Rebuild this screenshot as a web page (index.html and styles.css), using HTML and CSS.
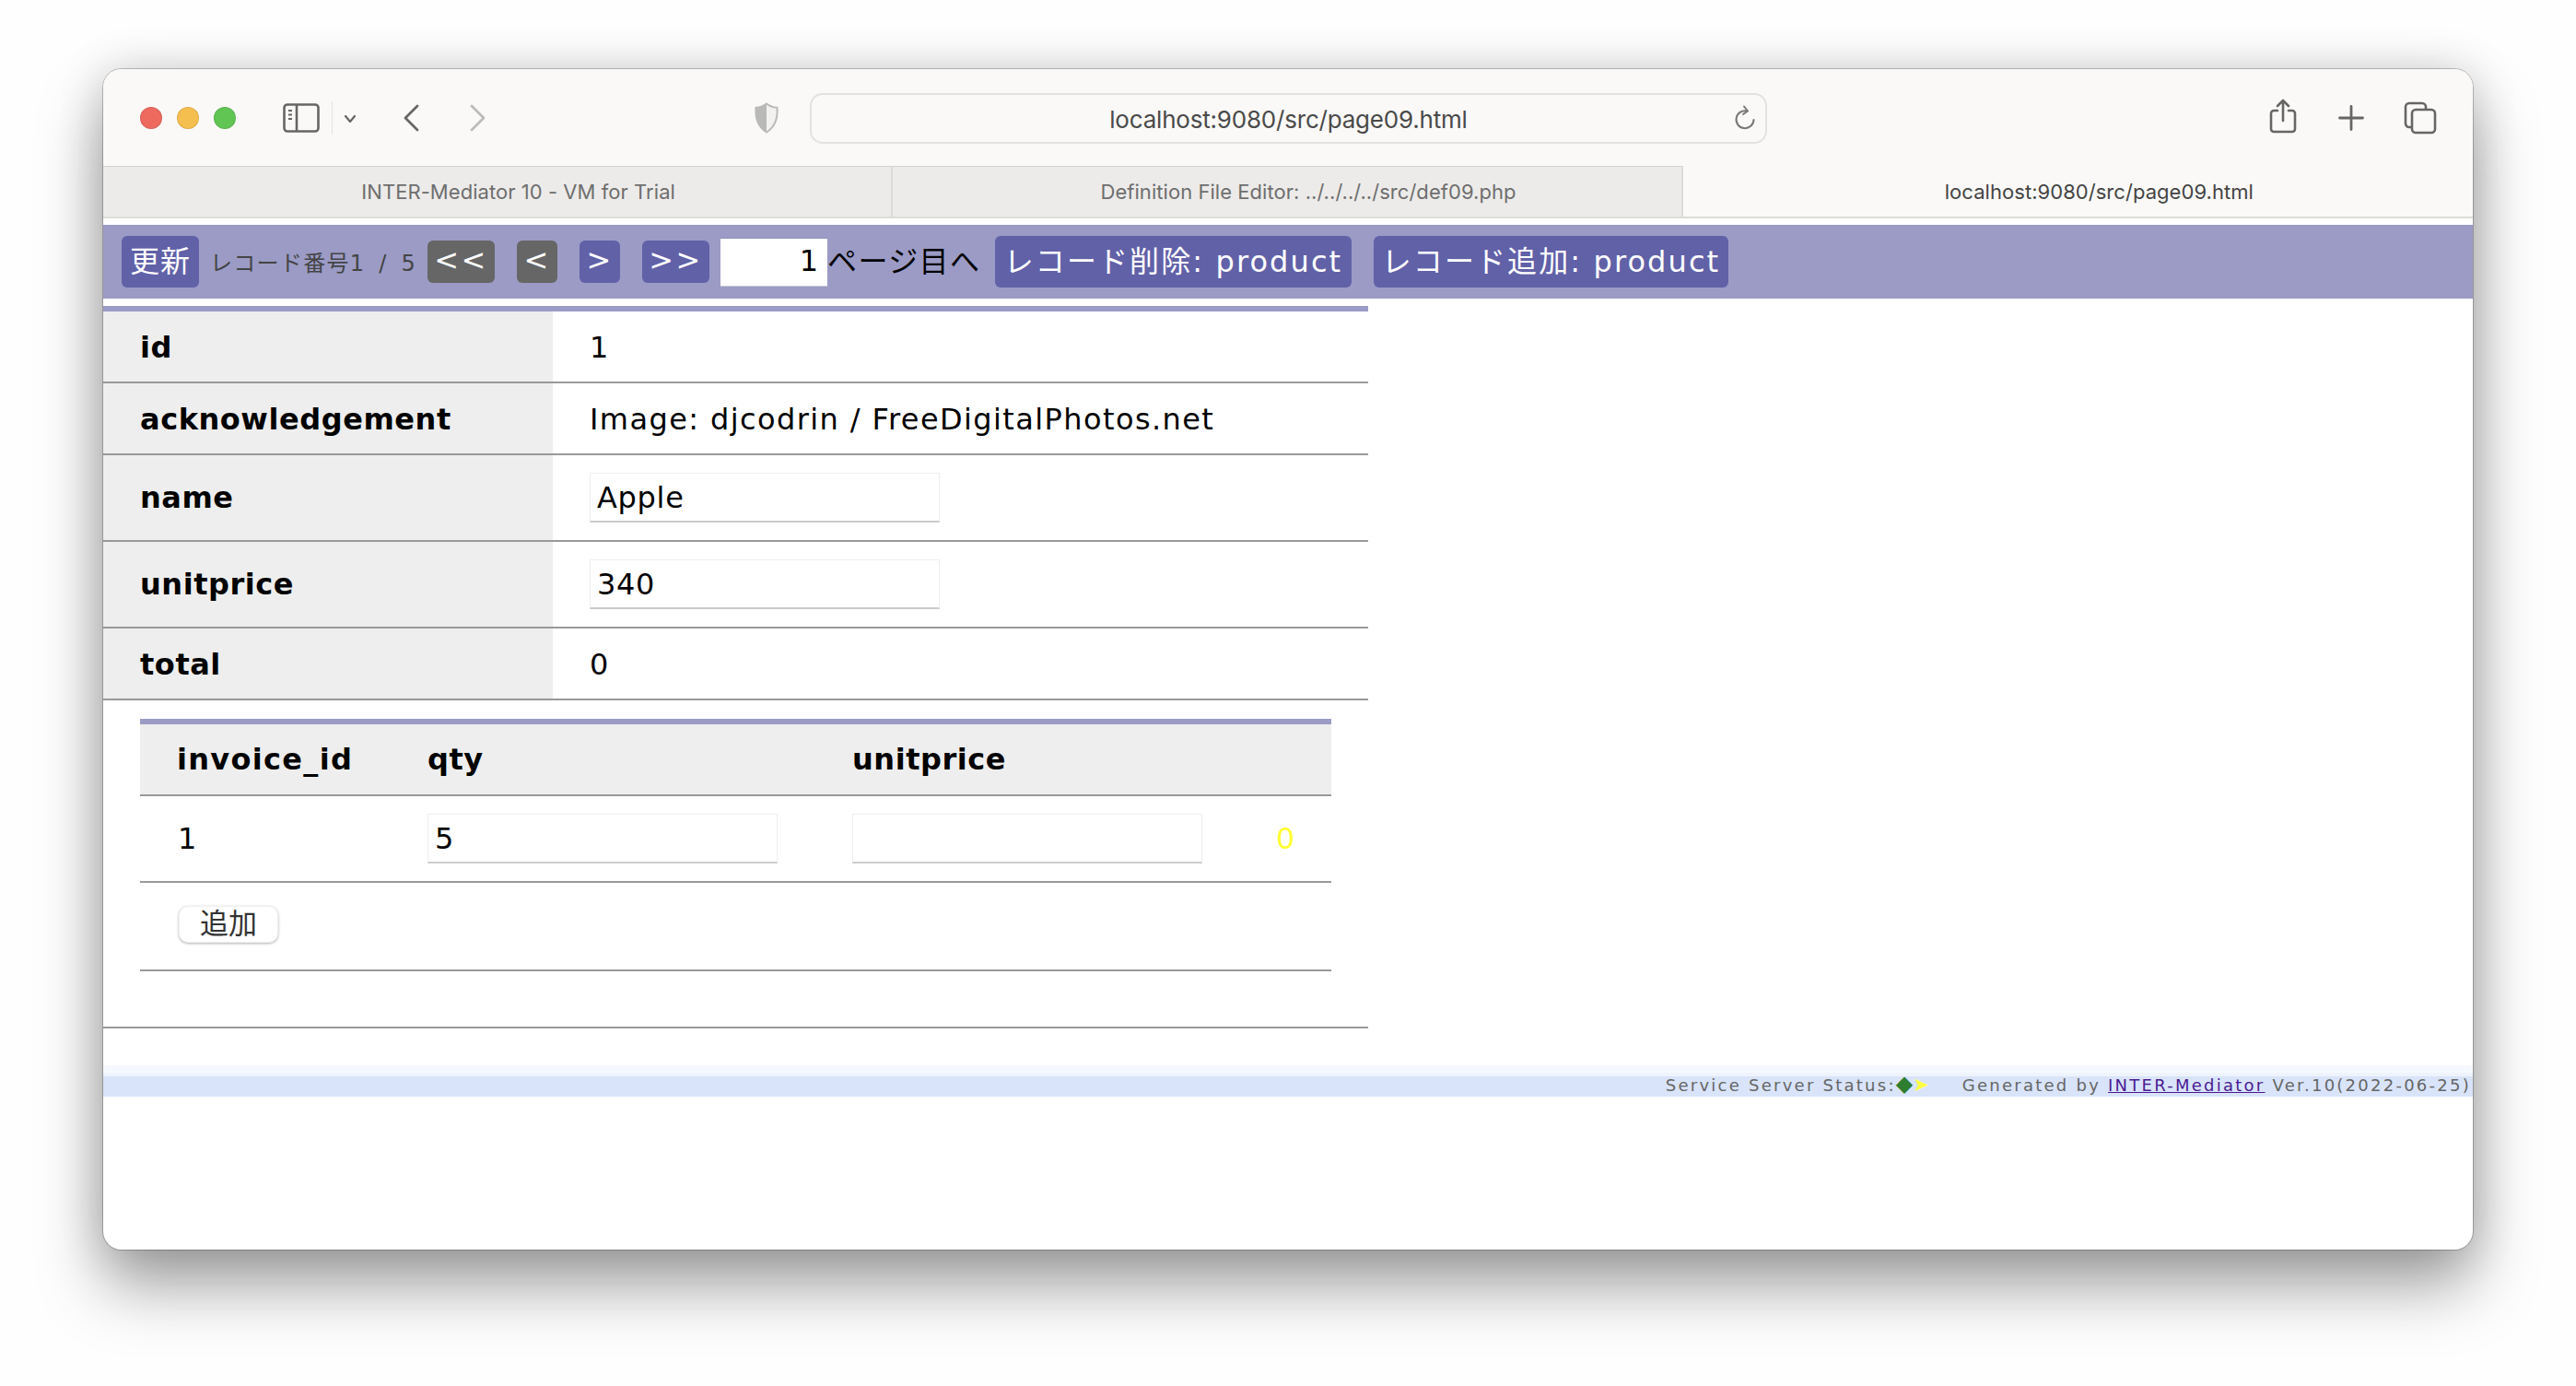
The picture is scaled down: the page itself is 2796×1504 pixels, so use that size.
FILE: index.html
```html
<!DOCTYPE html>
<html lang="ja">
<head>
<meta charset="utf-8">
<title>localhost:9080/src/page09.html</title>
<link rel="stylesheet" href="styles.css">
</head>
<body>
<div class="window">
  <header class="toolbar">
    <div class="lights">
      <span class="light red"></span><span class="light yellow"></span><span class="light green"></span>
    </div>
    <svg class="ic-sidebar" width="40" height="32" viewBox="0 0 40 32" fill="none" stroke="#666" stroke-width="2.6">
      <rect x="1.500" y="1.500" width="37" height="29" rx="3.500"/><path d="M15 2v28"/>
      <path d="M6 8h4M6 12.500h4M6 17h4" stroke-width="2"/>
    </svg>
    <span class="tb-sep"></span>
    <svg class="ic-drop" width="14" height="10" viewBox="0 0 14 10" fill="none" stroke="#666" stroke-width="2.2" stroke-linecap="round" stroke-linejoin="round"><path d="M2 2l5 6 5-6"/></svg>
    <svg class="ic-back" width="18" height="30" viewBox="0 0 18 30" fill="none" stroke="#666" stroke-width="2.8" stroke-linecap="round" stroke-linejoin="round"><path d="M16 2L3 15l13 13"/></svg>
    <svg class="ic-fwd" width="18" height="30" viewBox="0 0 18 30" fill="none" stroke="#bbb" stroke-width="2.8" stroke-linecap="round" stroke-linejoin="round"><path d="M2 2l13 13L2 28"/></svg>
    <svg class="ic-shield" width="28" height="34" viewBox="0 0 28 34">
      <path d="M14 1.500c3 2.500 7 4 11.500 4.300 .8 10.500-1 20-11.500 26.700C3.500 25.800 1.700 16.300 2.500 5.800 7 5.500 11 4 14 1.500z" fill="#f2f1ef" stroke="#b9b9b7" stroke-width="2"/>
      <path d="M14 1.500C11 4 7 5.500 2.500 5.800 1.700 16.300 3.500 25.800 14 32.500z" fill="#b9b9b7"/>
    </svg>
    <div class="urlbar">
      <span class="url">localhost:9080/src/page09.html</span>
      <svg class="ic-reload" width="24" height="28" viewBox="0 0 24 28" fill="none" stroke="#777" stroke-width="2" stroke-linecap="round" stroke-linejoin="round"><path d="M14.500 6.500A9.500 9.500 0 1 0 21.500 16"/><path d="M11 1.500l4 5-5 3.500"/></svg>
    </div>
    <svg class="ic-share" width="30" height="38" viewBox="0 0 30 38" fill="none" stroke="#666" stroke-width="2.6" stroke-linecap="round" stroke-linejoin="round"><path d="M9 13H5a3 3 0 0 0-3 3v17a3 3 0 0 0 3 3h20a3 3 0 0 0 3-3V16a3 3 0 0 0-3-3h-4"/><path d="M15 24V2M9 8l6-6 6 6"/></svg>
    <svg class="ic-plus" width="28" height="28" viewBox="0 0 28 28" stroke="#666" stroke-width="2.8" stroke-linecap="round"><path d="M14 1.500v25M1.500 14h25"/></svg>
    <svg class="ic-tabs" width="36" height="36" viewBox="0 0 36 36" fill="none" stroke="#666" stroke-width="2.6"><path d="M8 28H6a4 4 0 0 1-4-4V6a4 4 0 0 1 4-4h14a4 4 0 0 1 4 4v2"/><rect x="9" y="9" width="25" height="25" rx="4"/></svg>
  </header>
  <nav class="tabs">
    <div class="tab">INTER-Mediator 10 - VM for Trial</div>
    <div class="tab">Definition File Editor: ../../../../src/def09.php</div>
    <div class="tab tab-active">localhost:9080/src/page09.html</div>
  </nav>
  <main class="page">
    <div class="navbar">
      <button class="btn btn-big btn-refresh" type="button">更新</button>
      <span class="counter">レコード番号1 / 5</span>
      <button class="btn btn-step btn-off w-wide" type="button">&lt;&lt;</button>
      <button class="btn btn-step btn-off w-narrow" type="button">&lt;</button>
      <button class="btn btn-step w-narrow" type="button">&gt;</button>
      <button class="btn btn-step w-wide" type="button">&gt;&gt;</button>
      <span class="jump"><input class="jump-input" type="text" value="1"><span class="jump-label">ページ目へ</span></span>
      <button class="btn btn-big btn-del" type="button">レコード削除: product</button>
      <button class="btn btn-big btn-add" type="button">レコード追加: product</button>
    </div>

    <section class="record">
      <table class="master">
        <tbody>
          <tr class="low"><th>id</th><td>1</td></tr>
          <tr class="low"><th>acknowledgement</th><td>Image: djcodrin / FreeDigitalPhotos.net</td></tr>
          <tr class="tall"><th>name</th><td><input class="field" type="text" value="Apple"></td></tr>
          <tr class="tall"><th>unitprice</th><td><input class="field" type="text" value="340"></td></tr>
          <tr class="low"><th>total</th><td>0</td></tr>
        </tbody>
      </table>
      <div class="detail-wrap">
        <table class="detail">
          <thead>
            <tr class="head"><th class="c1">invoice_id</th><th class="c2">qty</th><th class="c3">unitprice</th><th class="c4"></th></tr>
          </thead>
          <tbody>
            <tr class="tall"><td>1</td><td><input class="field" type="text" value="5"></td><td><input class="field" type="text" value=""></td><td class="zero">0</td></tr>
            <tr class="addrow"><td colspan="4"><button class="addbtn" type="button">追加</button></td></tr>
          </tbody>
        </table>
      </div>
    </section>

    <footer class="status">
      <span>Service Server Status:<span class="dot-green">◆</span><span class="dot-yellow">➤</span></span>
      <span class="generated">Generated by <a href="#">INTER-Mediator</a> Ver.10(2022-06-25)</span>
    </footer>
  </main>
</div>
</body>
</html>
```
FILE: styles.css
```css
* { box-sizing: border-box; }
html, body { margin: 0; height: 100%; }
body {
  background: #fefefe;
  padding: 75px 112px 0;
  font-family: "DejaVu Sans", "Noto Sans CJK JP", sans-serif;
  overflow: hidden;
}
.window {
  width: 2572px;
  height: 1281px;
  background: #fff;
  border-radius: 20px;
  overflow: hidden;
  display: flex;
  flex-direction: column;
  box-shadow: 0 0 0 1px rgba(0,0,0,.22), 0 40px 70px rgba(0,0,0,.36), 0 0 50px rgba(0,0,0,.16);
}
.toolbar {
  height: 105px;
  flex: none;
  background: #faf9f7;
  display: flex;
  align-items: center;
  padding: 0 39px 0 40px;
}
.lights { display: flex; gap: 16px; margin-right: 51px; }
.light { width: 24px; height: 24px; border-radius: 50%; border: 1px solid rgba(0,0,0,.1); }
.red { background: #ee6a5f; }
.yellow { background: #f5bf4f; }
.green { background: #61c554; }
.ic-sidebar { flex: none; margin-top: 1px; }
.tb-sep { width: 1px; height: 36px; background: #e4e3e1; margin: 0 0 0 13px; flex: none; }
.ic-drop { flex: none; margin: 2px 0 0 12px; }
.ic-back { flex: none; margin: 0 0 0 50px; }
.ic-fwd { flex: none; margin: 0 0 0 55px; }
.ic-shield { flex: none; margin: 0 0 0 290px; }
.urlbar {
  width: 1039px;
  height: 55px;
  flex: none;
  margin: 2px 0 0 33px;
  border: 2px solid #e3e2e0;
  border-radius: 14px;
  background: #faf9f7;
  display: flex;
  align-items: center;
  justify-content: center;
  position: relative;
}
.url { font: 26px "Inter", sans-serif; color: #4a4a4a; letter-spacing: -.2px; padding-top: 1px; }
.ic-reload { position: absolute; right: 10px; top: 11px; }
.ic-share { flex: none; margin: -4px 0 0 545px; }
.ic-plus { flex: none; margin: 0 0 0 45px; }
.ic-tabs { flex: none; margin: 0 0 0 43px; }

.tabs {
  height: 57px;
  flex: none;
  display: grid;
  grid-template-columns: repeat(3, 1fr);
  border-bottom: 2px solid #dcdbd9;
  background: #ecebe9;
}
.tab {
  display: flex;
  align-items: center;
  justify-content: center;
  padding-left: 46px;
  font: 22px "Inter", sans-serif;
  letter-spacing: .05px;
  color: #6e6e6e;
  border-top: 1px solid #d3d2d0;
  border-right: 2px solid #dcdbd9;
}
.tab-active { background: #faf9f7; color: #444; border-right: 0; border-top: 0; padding-top: 1px; }

.page { flex: 1; padding-top: 7px; display: flex; flex-direction: column; }
.navbar {
  height: 80px;
  flex: none;
  background: #9b9bc6;
  display: flex;
  align-items: center;
  padding-left: 20px;
}
.btn {
  border: 0;
  background: #6161a8;
  color: #fff;
  border-radius: 6px;
  font-family: "DejaVu Sans", "Noto Sans CJK JP", sans-serif;
  padding: 0 0 7px;
}
.btn-big { height: 56px; font-size: 32px; letter-spacing: 2.1px; white-space: nowrap; }
.btn-refresh { width: 84px; letter-spacing: 1px; }
.counter { font-size: 24px; color: #444; margin-left: 12px; width: 236px; white-space: nowrap; letter-spacing: 1.3px; word-spacing: 6px; padding-bottom: 2px; }
.btn-step { height: 46px; font-size: 32px; letter-spacing: 2.4px; margin-right: 24px; padding-bottom: 5px; }
.btn-off { background: #666; }
.w-wide { width: 73px; }
.w-narrow { width: 44px; }
.jump { display: flex; align-items: center; margin-left: -12px; margin-right: 15px; }
.jump-input {
  width: 116px;
  height: 53px;
  border: 0;
  border-top: 1px solid #8f8fbc;
  border-bottom: 1px solid #c9c9d8;
  background: #fff;
  text-align: right;
  font: 32px "DejaVu Sans", sans-serif;
  color: #000;
  padding: 0 10px 2px 0;
}
.jump-label { font-size: 32px; color: #000; white-space: nowrap; width: 167px; letter-spacing: 1.4px; padding-bottom: 6px; }
.btn-del { width: 387px; margin-right: 24px; }
.btn-add { width: 385px; }

.record { width: 1373px; margin-top: 8px; border-bottom: 2px solid #999; padding-bottom: 60px; flex: none; }
table { border-collapse: separate; border-spacing: 0; }
.master { width: 100%; table-layout: fixed; border-top: 6px solid #9b9bc6; }
.master th, .master td, .detail th, .detail td {
  border-bottom: 2px solid #999;
  padding: 0;
  font-size: 32px;
  letter-spacing: 1.4px;
  color: #000;
  text-align: left;
}
.master th, .detail th { letter-spacing: .55px; }
.master th { width: 488px; background: #eee; padding-left: 40px; }
.master td { padding-left: 40px; }
tr.low > * { height: 78px; padding-top: 2px; }
tr.tall > * { height: 94px; }
.field {
  display: block;
  width: 380px;
  height: 54px;
  border: 1px solid #eee;
  border-bottom: 2px solid #ccc;
  background: #fff;
  padding: 0 7px;
  font: 32px "DejaVu Sans", sans-serif;
  letter-spacing: .7px;
  color: #000;
}
.detail-wrap { padding: 20px 40px 0; }
.detail { width: 1293px; table-layout: fixed; border-top: 6px solid #9b9bc6; }
.detail tr.head th { height: 78px; background: #eee; }
.detail .c1 { width: 312px; padding-left: 40px; letter-spacing: 1.3px; }
.detail .c2 { width: 461px; }
.detail .c3 { width: 420px; }
.detail td:first-child { padding-left: 41px; }
.detail td.zero { color: #ffff33; padding-left: 40px; font-size: 32px; }
.addrow td { height: 96px; }
.addbtn {
  width: 108px;
  height: 40px;
  margin: -4px 0 0 1px;
  background: #fff;
  border: 1px solid #eee;
  border-radius: 10px;
  box-shadow: 0 1px 3px rgba(0,0,0,.3);
  font: 31px "Noto Sans CJK JP", sans-serif;
  line-height: 30px;
  color: #333;
  padding: 0 0 6px;
  display: block;
}
.status {
  margin-top: 40px;
  height: 34px;
  flex: none;
  background: linear-gradient(#f5f8fe 0 8px, #eef3fd 8px 12px, #d9e4fa 12px);
  display: flex;
  justify-content: flex-end;
  align-items: flex-end;
  font-size: 18px;
  letter-spacing: 2.25px;
  color: #666;
  padding-right: 2px;
  white-space: nowrap;
  line-height: 24px;
}
.dot-green { color: #2f7d2f; font-size: 24px; line-height: 0; letter-spacing: 0; }
.dot-yellow { color: #ffff44; font-size: 21px; line-height: 0; letter-spacing: 0; }
.generated { margin-left: 36px; }
.status a { color: #4b1a92; }
```
